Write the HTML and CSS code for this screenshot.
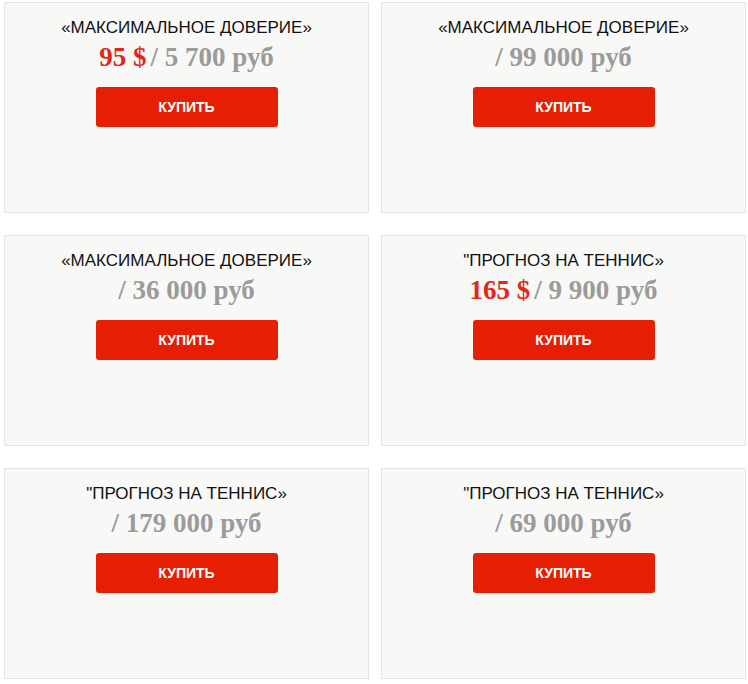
FILE: index.html
```html
<!DOCTYPE html>
<html lang="ru">
<head>
    <meta charset="UTF-8">
    <meta name="viewport" content="width=device-width, initial-scale=1.0">
    <title>Тарифы</title>
    <link rel="stylesheet" href="styles.css">
</head>
<body>
    <div class="tariffs">
        <div class="tariff">
            <div class="tariff-name">«МАКСИМАЛЬНОЕ ДОВЕРИЕ»</div>
            <div class="tariff-price"><span class="usd">95 $</span>/ 5 700 руб</div>
            <a class="buy-btn" href="#">КУПИТЬ</a>
        </div>
        <div class="tariff">
            <div class="tariff-name">«МАКСИМАЛЬНОЕ ДОВЕРИЕ»</div>
            <div class="tariff-price">/ 99 000 руб</div>
            <a class="buy-btn" href="#">КУПИТЬ</a>
        </div>
        <div class="tariff">
            <div class="tariff-name">«МАКСИМАЛЬНОЕ ДОВЕРИЕ»</div>
            <div class="tariff-price">/ 36 000 руб</div>
            <a class="buy-btn" href="#">КУПИТЬ</a>
        </div>
        <div class="tariff">
            <div class="tariff-name">"ПРОГНОЗ НА ТЕННИС»</div>
            <div class="tariff-price"><span class="usd">165 $</span>/ 9 900 руб</div>
            <a class="buy-btn" href="#">КУПИТЬ</a>
        </div>
        <div class="tariff">
            <div class="tariff-name">"ПРОГНОЗ НА ТЕННИС»</div>
            <div class="tariff-price">/ 179 000 руб</div>
            <a class="buy-btn" href="#">КУПИТЬ</a>
        </div>
        <div class="tariff">
            <div class="tariff-name">"ПРОГНОЗ НА ТЕННИС»</div>
            <div class="tariff-price">/ 69 000 руб</div>
            <a class="buy-btn" href="#">КУПИТЬ</a>
        </div>
    </div>
</body>
</html>
```

FILE: styles.css
```css
body {
    margin: 0;
    padding: 2px 2px 0 4px;
    background: #fff;
    font-family: "Liberation Sans", Arial, sans-serif;
}
.tariffs {
    display: grid;
    grid-template-columns: 365px 365px;
    column-gap: 12px;
    row-gap: 22px;
}
.tariff {
    height: 211px;
    box-sizing: border-box;
    background: #f8f8f6;
    border: 1px solid #e4e4e2;
    padding-top: 15px;
    display: flex;
    flex-direction: column;
    align-items: center;
}
.tariff-name {
    font-size: 17px;
    line-height: 20px;
    color: #111;
    margin-bottom: 4px;
}
.tariff-price {
    font-family: "Liberation Serif", "Times New Roman", serif;
    font-weight: bold;
    font-size: 27px;
    line-height: 31px;
    color: #9b9b9b;
    margin-bottom: 14px;
}
.tariff-price .usd {
    color: #e3261b;
    margin-right: 4px;
}
.buy-btn {
    display: block;
    width: 182px;
    height: 40px;
    line-height: 40px;
    text-align: center;
    background: #e61e04;
    color: #fff;
    font-size: 14px;
    font-weight: bold;
    text-decoration: none;
    border-radius: 3px;
}
```
